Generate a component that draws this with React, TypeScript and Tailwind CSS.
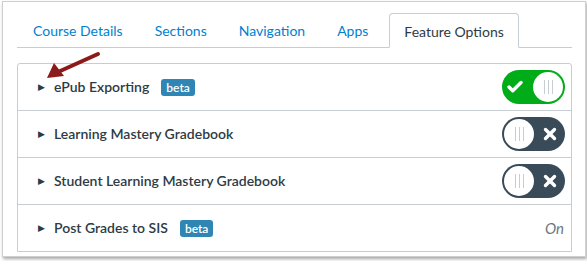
import { Check, X } from 'lucide-react';

const TABS = ['Course Details', 'Sections', 'Navigation', 'Apps'];

type Feature = {
  name: string;
  beta?: boolean;
  state: 'on' | 'off' | 'text';
};

const FEATURES: Feature[] = [
  { name: 'ePub Exporting', beta: true, state: 'on' },
  { name: 'Learning Mastery Gradebook', state: 'off' },
  { name: 'Student Learning Mastery Gradebook', state: 'off' },
  { name: 'Post Grades to SIS', beta: true, state: 'text' },
];

function Grip() {
  return (
    <div className="flex gap-[3px]">
      <span className="w-px h-[14px] bg-[#c7cdd1]" />
      <span className="w-px h-[14px] bg-[#c7cdd1]" />
      <span className="w-px h-[14px] bg-[#c7cdd1]" />
    </div>
  );
}

function Toggle({ on }: { on: boolean }) {
  return (
    <div
      className={`w-[63px] h-[34px] rounded-full flex items-center px-[2px] ${
        on ? 'bg-[#00ac18] justify-end' : 'bg-[#394b58] justify-start'
      }`}
    >
      {on && (
        <Check className="text-white w-[18px] h-[18px] mr-[9px]" strokeWidth={4.5} />
      )}
      <div className="w-[30px] h-[30px] rounded-full bg-white flex items-center justify-center">
        <Grip />
      </div>
      {!on && <X className="text-white w-[18px] h-[18px] ml-[7px]" strokeWidth={4.5} />}
    </div>
  );
}

export default function App() {
  return (
    <div
      className="relative w-[587px] h-[261px] bg-white overflow-hidden"
      style={{ fontFamily: 'Lato, "Open Sans", sans-serif' }}
    >
      <div className="ml-[2px] mt-[1px] w-[584px] h-[256px] border border-[#cfcfcf] shadow-[1px_2px_3px_rgba(0,0,0,0.35)] overflow-hidden pl-[14px] pt-[11px]">
        <ul className="flex items-end w-[555px] h-[35px] border-b border-[#c7cdd1] text-[14px]">
          {TABS.map((t) => (
            <li key={t} className="px-[16px] h-[34px] pt-[1px] flex items-center text-[#0081d0]">
              {t}
            </li>
          ))}
          <li className="ml-[5px] -mb-px px-[14px] h-[35px] pt-[1px] flex items-center text-[#2d3b45] bg-white border border-b-white border-[#c7cdd1] rounded-t-[4px]">
            Feature Options
          </li>
        </ul>

        <div className="mt-[15px] w-[555px] border border-[#c7cdd1] rounded-t-[3px]">
          {FEATURES.map((f, i) => (
            <div
              key={f.name}
              className={`flex items-center pl-[20px] pr-[6px] ${
                i > 0 ? 'h-[47px] border-t border-[#c7cdd1]' : 'h-[46px]'
              }`}
            >
              <span className="text-[9px] text-[#2d3b45] w-[16px]">▶</span>
              <span className="text-[14px] font-semibold text-[#2d3b45] -mt-[2px]">{f.name}</span>
              {f.beta && (
                <span className="ml-[12px] px-[5px] h-[17px] leading-[17px] rounded-[3px] bg-[#2f85b3] text-white text-[12px] font-semibold">
                  beta
                </span>
              )}
              <span className="flex-1" />
              {f.state === 'text' ? (
                <span className="italic text-[15px] text-[#6b7780] mr-[1px]">On</span>
              ) : (
                <Toggle on={f.state === 'on'} />
              )}
            </div>
          ))}
        </div>
      </div>

      <svg
        className="absolute left-0 top-0 pointer-events-none"
        width="587"
        height="261"
        viewBox="0 0 587 261"
      >
        <line x1="98" y1="54" x2="58" y2="72" stroke="#8b1a1a" strokeWidth="4" strokeLinecap="round" />
        <polygon points="47,78 54,63 64,76" fill="#8b1a1a" />
      </svg>
    </div>
  );
}
